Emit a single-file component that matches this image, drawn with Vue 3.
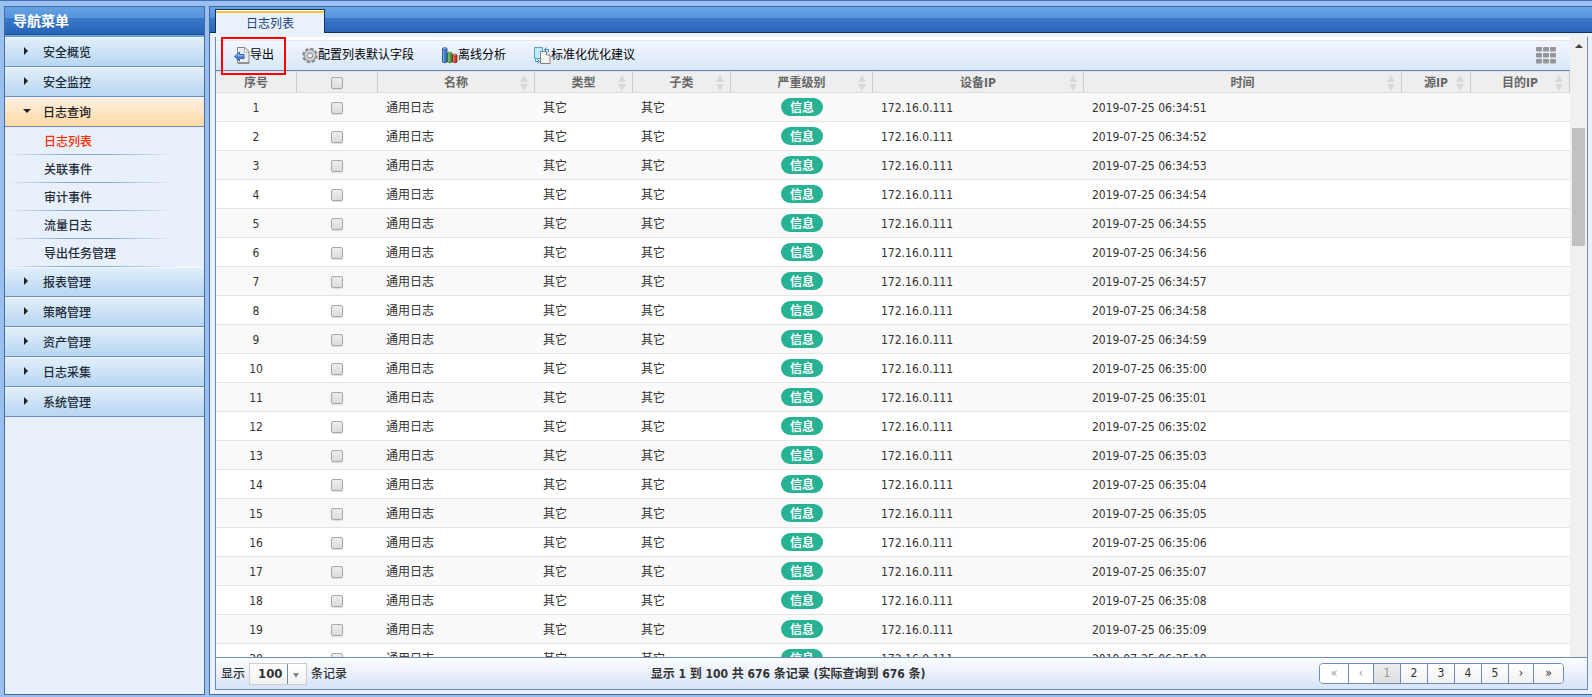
<script setup>
import { ref } from 'vue'

const menuTop = ['安全概览', '安全监控']
const menuBottom = ['报表管理', '策略管理', '资产管理', '日志采集', '系统管理']
const subMenu = ['日志列表', '关联事件', '审计事件', '流量日志', '导出任务管理']

const columns = [
  { label: '序号', cls: 'w-no' },
  { label: '', cls: 'w-check', check: true },
  { label: '名称', cls: 'w-name', sort: true },
  { label: '类型', cls: 'w-type', sort: true },
  { label: '子类', cls: 'w-type', sort: true },
  { label: '严重级别', cls: 'w-level', sort: true },
  { label: '设备IP', cls: 'w-device', sort: true },
  { label: '时间', cls: 'w-time', sort: true },
  { label: '源IP', cls: 'w-src', sort: true },
  { label: '目的IP', cls: 'w-dst', sort: true },
]

const rows = Array.from({ length: 20 }, (_, i) => {
  const total = 34 * 60 + 51 + i
  const pad = (n) => String(n).padStart(2, '0')
  return {
    no: i + 1,
    name: '通用日志',
    type: '其它',
    sub: '其它',
    level: '信息',
    device: '172.16.0.111',
    time: `2019-07-25 06:${pad(Math.floor(total / 60))}:${pad(total % 60)}`,
  }
})

const pages = ['«', '‹', '1', '2', '3', '4', '5', '›', '»']
const pageSize = ref('100')
</script>

<template>
  <div class="app">
    <aside class="side">
      <h1 class="side-title">导航菜单</h1>
      <nav>
        <button v-for="m in menuTop" :key="m" type="button" class="menu"><i class="tri"></i>{{ m }}</button>
        <button type="button" class="menu open"><i class="tri down"></i>日志查询</button>
        <ul class="sub">
          <li v-for="(s, i) in subMenu" :key="s"><a href="#" :class="{ on: i === 0 }">{{ s }}</a></li>
        </ul>
        <button v-for="m in menuBottom" :key="m" type="button" class="menu"><i class="tri"></i>{{ m }}</button>
      </nav>
    </aside>

    <main class="main">
      <div class="tabs">
        <button type="button" class="tab">日志列表</button>
      </div>
      <div class="box">
        <div class="view">
          <div class="content">
            <div class="toolbar">
              <div class="highlight"></div>
              <button type="button" class="tool">
                <svg width="16" height="17" viewBox="0 0 16 17">
                  <path d="M3.500.5h7.500l4 4v11.500H3.500z" fill="#f4f5f7" stroke="#858585" />
                  <path d="M5 2h5.500v3.500h3.500v9H8z" fill="#e6e9ee" />
                  <path d="M10.500.5v4.500H15z" fill="#fff" stroke="#999" stroke-width=".8" />
                  <path d="M4 16h11" stroke="#666" />
                  <path d="M.5 9.500l5-4.500v2.500h4.500v4H5.500V14z" fill="#4b82cf" stroke="#2c5ba6" stroke-width=".9" />
                  <path d="M2 9.300l2.700-2.300v1.700h4.600" fill="none" stroke="#9cc2f2" />
                </svg>导出
              </button>
              <button type="button" class="tool">
                <svg width="16" height="17" viewBox="0 0 16 17">
                  <circle cx="8" cy="8.500" r="6.600" fill="none" stroke="#8b8b8b" stroke-width="2.400" stroke-dasharray="3.400 1.780" />
                  <circle cx="8" cy="8.500" r="5.600" fill="#c4c4c4" stroke="#999" stroke-width="1.200" />
                  <circle cx="8" cy="8.500" r="4.200" fill="none" stroke="#dcdcdc" stroke-width="1.400" />
                  <circle cx="8" cy="8.500" r="2.600" fill="#edf3fb" stroke="#858585" />
                </svg>配置列表默认字段
              </button>
              <button type="button" class="tool">
                <svg width="16" height="17" viewBox="0 0 16 17">
                  <path d="M.5 1.500v13.500q2.300 1.500 4.500 0V1.500z" fill="#3b76cf" stroke="#1c4588" stroke-width=".8" />
                  <path d="M1.800 3v12" stroke="#8ab4ee" />
                  <ellipse cx="2.750" cy="1.500" rx="2.200" ry=".9" fill="#a8c8f3" stroke="#1c4588" stroke-width=".6" />
                  <path d="M5.500 6v9q2.300 1.500 4.500 0V6z" fill="#4c9c39" stroke="#286318" stroke-width=".8" />
                  <path d="M6.800 7v8.500" stroke="#97cf7f" />
                  <ellipse cx="7.750" cy="6" rx="2.200" ry=".9" fill="#b9e3a5" stroke="#286318" stroke-width=".6" />
                  <path d="M10.500 8v7q2.300 1.500 4.500 0V8z" fill="#ce3a28" stroke="#7c1712" stroke-width=".8" />
                  <path d="M11.800 9v6.500" stroke="#f08c74" />
                  <ellipse cx="12.750" cy="8" rx="2.200" ry=".9" fill="#f5aea2" stroke="#7c1712" stroke-width=".6" />
                </svg>离线分析
              </button>
              <button type="button" class="tool">
                <svg width="17" height="17" viewBox="0 0 17 17">
                  <path d="M.5.5h8v11h-8z" fill="#bdecfb" stroke="#5a9dc6" />
                  <path d="M10.500 2.500h4V5M12.500.5l-2 2 2 2" fill="none" stroke="#3c80b8" />
                  <path d="M1.500 12.500v2h3M3.500 12.500l2 2-2 2" fill="none" stroke="#3c80b8" />
                  <path d="M6.500 4.500h6l3.500 3.500v8.500H6.500z" fill="#f6f6f6" stroke="#808080" />
                  <path d="M12.500 4.500V8H16" fill="#fff" stroke="#808080" />
                </svg>标准化优化建议
              </button>
              <button type="button" class="grid-btn" aria-label="列">
                <svg width="20" height="17" viewBox="0 0 20 17" fill="#969696">
                  <template v-for="y in 3" :key="y">
                    <rect v-for="x in 3" :key="x" :x="(x - 1) * 7" :y="(y - 1) * 6" width="6" height="4.500" rx="1" />
                  </template>
                </svg>
              </button>
            </div>
            <table>
              <colgroup>
                <col v-for="(c, i) in columns" :key="i" :class="c.cls" />
              </colgroup>
              <thead>
                <tr>
                  <th v-for="(c, i) in columns" :key="i">
                    <input v-if="c.check" type="checkbox" aria-label="全选" />
                    <template v-else>{{ c.label }}</template>
                    <svg v-if="c.sort" class="sort" width="8" height="16" viewBox="0 0 8 16" fill="#d8d8d8">
                      <path d="M4 0l4 7H0zM0 9h8l-4 7z" />
                    </svg>
                  </th>
                </tr>
              </thead>
              <tbody>
                <tr v-for="r in rows" :key="r.no">
                  <td class="mid">{{ r.no }}</td>
                  <td class="mid"><input type="checkbox" :aria-label="'选择 ' + r.no" /></td>
                  <td>{{ r.name }}</td>
                  <td>{{ r.type }}</td>
                  <td>{{ r.sub }}</td>
                  <td class="level"><span class="badge">{{ r.level }}</span></td>
                  <td>{{ r.device }}</td>
                  <td>{{ r.time }}</td>
                  <td></td>
                  <td></td>
                </tr>
              </tbody>
            </table>
          </div>
          <div class="scroll">
            <i class="up"></i>
            <div class="thumb"></div>
          </div>
        </div>
        <footer class="foot">
          <div class="size">
            <label for="size">显示</label>
            <span class="select">
              <select id="size" v-model="pageSize"><option>100</option></select>
              <i class="caret"></i>
            </span>
            <span>条记录</span>
          </div>
          <div class="info">显示 1 到 100 共 676 条记录 (实际查询到 676 条)</div>
          <div class="pager">
            <button
              v-for="(p, i) in pages"
              :key="p"
              type="button"
              :class="{ off: i < 2, current: i === 2, narrow: p === '‹' || p === '›' }"
            >{{ p }}</button>
          </div>
        </footer>
      </div>
    </main>
  </div>
</template>

<style>
body {
  background: #99c0ef;
}
</style>

<style scoped>
* {
  box-sizing: border-box;
}
.app {
  height: 100vh;
  display: flex;
  gap: 4px;
  padding: 5px 0 2px 4px;
  border-top: 1px solid #476fb8;
  overflow: hidden;
  font: 12px/18px "DejaVu Sans Condensed", "Noto Sans CJK SC", sans-serif;
  color: #333;
}
button,
select {
  font: inherit;
  color: inherit;
  margin: 0;
  padding: 0;
  border: 0;
  background: none;
}
.side {
  flex: 0 0 201px;
  border: 1px solid #46699f;
  background: #e8f0fc;
}
.side-title {
  margin: 0;
  height: 30px;
  padding: 0 8px;
  font-size: 14px;
  line-height: 28px;
  color: #fff;
  background: linear-gradient(#65a2e4 0, #5594db 11px, #3b7acb 11px, #2763b5 27px, #27518f 27px, #27518f 28px, #62a0e6 28px);
}
.menu {
  display: flex;
  align-items: center;
  width: 100%;
  height: 30px;
  padding-top: 2px;
  padding-left: 19px;
  font-weight: 500;
  color: #222c38;
  border-top: 1px solid #f2f9ff;
  border-bottom: 1px solid #6b8cbc;
  background: linear-gradient(#e1effb, #b7d6f2);
}
.menu.open {
  background: linear-gradient(#fff1e0, #fed9a6);
  color: #222;
}
.tri {
  width: 19px;
  height: 8px;
  margin-bottom: 4px;
}
.tri::before {
  content: "";
  display: block;
  width: 0;
  border: 4px solid transparent;
  border-left-color: #222;
  border-right: 0;
}
.tri.down::before {
  border: 4px solid transparent;
  border-top-color: #222;
  border-bottom: 0;
  margin-top: 2px;
  margin-left: -1px;
}
.sub {
  list-style: none;
  margin: 0;
  padding: 0;
}
.sub li {
  height: 28px;
  padding-top: 1px;
  padding-left: 39px;
  line-height: 28px;
  background: linear-gradient(90deg, transparent, #8ca9cf 35%, #8ca9cf 60%, transparent) 0 100% / 170px 1px no-repeat;
}
.sub a {
  color: #222c38;
  font-weight: 500;
  text-decoration: none;
}
.sub a.on {
  color: #ff2d00;
}
.main {
  flex: 1;
  min-width: 0;
  display: flex;
  flex-direction: column;
  padding-bottom: 4px;
  border: 1px solid #46699f;
  border-right: 0;
  background: #e8f1fc;
}
.tabs {
  height: 26px;
  flex: none;
  padding: 2px 0 0 5px;
  background: linear-gradient(#69a4e6 0, #5793db 11px, #3d7acc 11px, #2a65b8 25px, #14305f 25px);
}
.tab {
  display: block;
  width: 110px;
  height: 24px;
  border: 1px solid #15305f;
  border-bottom: 0;
  color: #1c3f82;
  background: linear-gradient(#fff 0, #fff 1px, #ffc33c 1px, #ffc33c 3px, #e8f1fc 3px);
  padding-top: 4px;
  line-height: 18px;
}
.box {
  flex: 1;
  min-height: 0;
  display: flex;
  flex-direction: column;
  margin: 4px 4px 0 5px;
  border: 1px solid #6b8cbc;
  border-top: 0;
}
.view {
  flex: 1;
  min-height: 0;
  display: flex;
  overflow: hidden;
}
.content {
  flex: 1;
  min-width: 0;
  background: #fff;
}
.toolbar {
  position: relative;
  height: 34px;
  display: flex;
  align-items: center;
  gap: 28px;
  padding: 0 14px 0 18px;
  border-top: 3px solid #fff;
  border-bottom: 1px solid #5f81b5;
  background: linear-gradient(#e2e6ee 0, #e2e6ee 1px, #f2f6ff 1px, #d6e8f8);
}
.highlight {
  position: absolute;
  left: 5px;
  top: -3px;
  width: 65px;
  height: 38px;
  border: 2px solid #f00;
  z-index: 1;
  pointer-events: none;
}
.tool {
  display: flex;
  align-items: center;
  color: #000;
  white-space: nowrap;
}
.grid-btn {
  margin-left: auto;
  display: flex;
}
table {
  width: 100%;
  table-layout: fixed;
  border-collapse: separate;
  border-spacing: 0;
}
.w-no, .w-check { width: 81px; }
.w-name { width: 157px; }
.w-type { width: 98px; }
.w-level { width: 142px; }
.w-device { width: 211px; }
.w-time { width: 318px; }
.w-src { width: 69px; }
.w-dst { width: 99px; }
th {
  position: relative;
  height: 22px;
  padding: 2px 0 0;
  line-height: 18px;
  color: #666;
  background: #eee;
  border-top: 1px solid #e2e2e2;
  border-right: 1px solid #ccc;
  border-bottom: 1px solid #ddd;
}
.sort {
  position: absolute;
  right: 6px;
  top: 3px;
}
td {
  height: 29px;
  padding: 2px 8px 0;
  border-bottom: 1px solid #e5e5e5;
  white-space: nowrap;
}
tr:nth-child(odd) td {
  background: #f9f9f9;
}
.mid {
  padding-right: 9px;
  text-align: center;
}
.level {
  padding-top: 0;
  text-align: center;
}
input {
  appearance: none;
  display: block;
  width: 12px;
  height: 12px;
  margin: 0 auto;
  border: 1px solid #a8a8a8;
  border-radius: 2px;
  background: linear-gradient(#ededed, #dcdcdc);
  box-shadow: 0 1px 1px #ddd;
}
.badge {
  display: block;
  width: 42px;
  height: 18px;
  margin: 0 auto;
  padding-top: 1px;
  line-height: 18px;
  border-radius: 9px;
  color: #fff;
  font-weight: 700;
  background: #28b294;
}
.scroll {
  flex: 0 0 17px;
  padding: 7px 2px 0;
  background: #f0f0f0;
}
.up {
  display: block;
  width: 0;
  margin: 0 auto;
  border: 4px solid transparent;
  border-bottom-color: #444;
  border-top: 0;
}
.thumb {
  height: 118px;
  margin-top: 80px;
  background: #c1c1c1;
}
.foot {
  flex: none;
  height: 32px;
  display: flex;
  align-items: center;
  padding: 0 23px 0 5px;
  border-top: 1px solid #6b8cbc;
  background: linear-gradient(#fcfdff, #d6e4f7);
  font-weight: 700;
}
.size {
  flex: 0 0 32%;
  display: flex;
  align-items: center;
  gap: 4px;
  font-weight: 500;
}
.select {
  position: relative;
  width: 58px;
  height: 22px;
  border: 1px solid #ccc;
  background: linear-gradient(#fff, #f3f3f3);
}
.select::before {
  content: "";
  position: absolute;
  left: 37px;
  top: 0;
  bottom: 0;
  width: 1px;
  background: #6b8cbc;
}
select {
  appearance: none;
  display: block;
  width: 100%;
  height: 20px;
  padding-left: 8px;
  font-size: 13px;
  font-weight: 700;
}
.caret {
  position: absolute;
  right: 7px;
  top: 9px;
  border: 3px solid transparent;
  border-top: 5px solid #888;
  border-bottom: 0;
  pointer-events: none;
}
.info {
  white-space: nowrap;
}
.pager {
  display: flex;
  margin-left: auto;
  border: 1px solid #6b8cbc;
  border-radius: 4px;
  overflow: hidden;
}
.pager button {
  width: 27px;
  height: 19px;
  line-height: 19px;
  font-weight: 400;
  color: #333;
  border-right: 1px solid #6b8cbc;
  background: linear-gradient(#fff, #f1f1f1);
}
.pager button.narrow {
  width: 25px;
}
.pager button:first-child,
.pager button:last-child {
  width: 29px;
}
.pager button:last-child {
  border-right: 0;
}
.pager button.off {
  color: #999;
  background: #fff;
}
.pager button.current {
  color: #999;
  background: linear-gradient(#eee, #dfdfdf);
}
</style>
